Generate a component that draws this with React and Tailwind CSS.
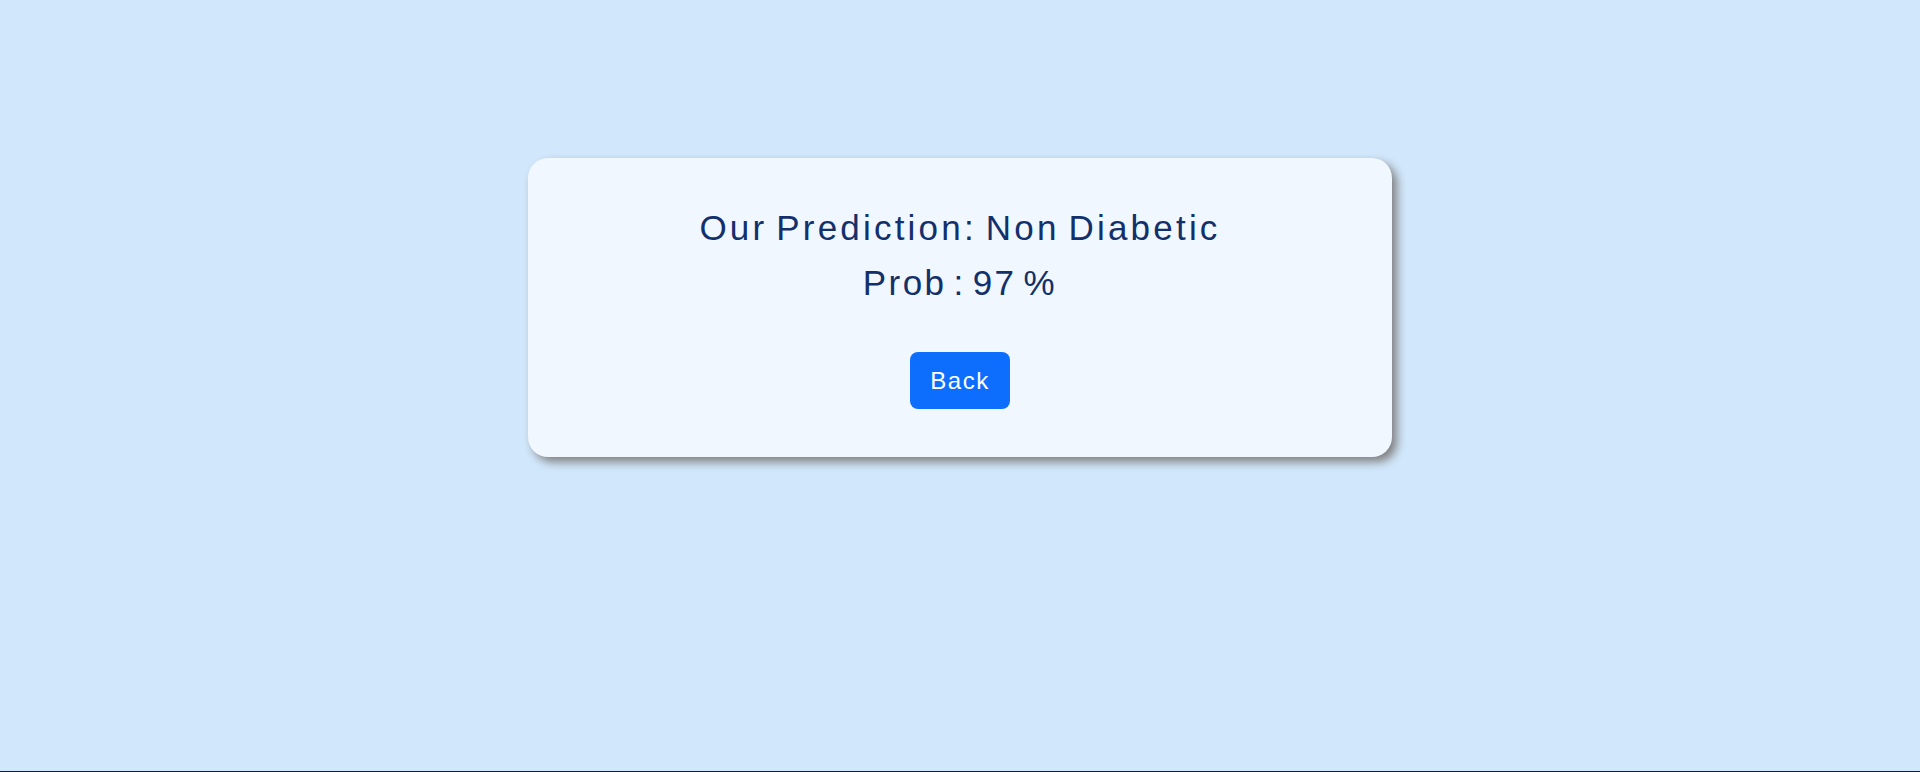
import React from 'react';

export default function App() {
  return (
    <div className="min-h-[772px] bg-[#d1e7fb] border-b border-[#0f1e3d] font-['Liberation_Sans',sans-serif]">
      <div className="pt-[158px]">
        <div className="mx-auto w-[864px] h-[299px] bg-[#f0f7ff] rounded-[20px] shadow-[5px_5px_10px_#808080] flex flex-col items-center pt-[42px]">
          <div className="text-center text-[35px] leading-[55px] text-[#13306b] tracking-[3.2px] [word-spacing:-4px]">
            <div>Our Prediction: Non Diabetic</div>
            <div className="tracking-[2.4px] [word-spacing:-5px]">Prob : 97 %</div>
          </div>
          <button className="mt-[42px] w-[100px] h-[57px] rounded-[8px] bg-[#0d6efd] text-white text-[24px] tracking-[1.5px] flex items-center justify-center">
            Back
          </button>
        </div>
      </div>
    </div>
  );
}
